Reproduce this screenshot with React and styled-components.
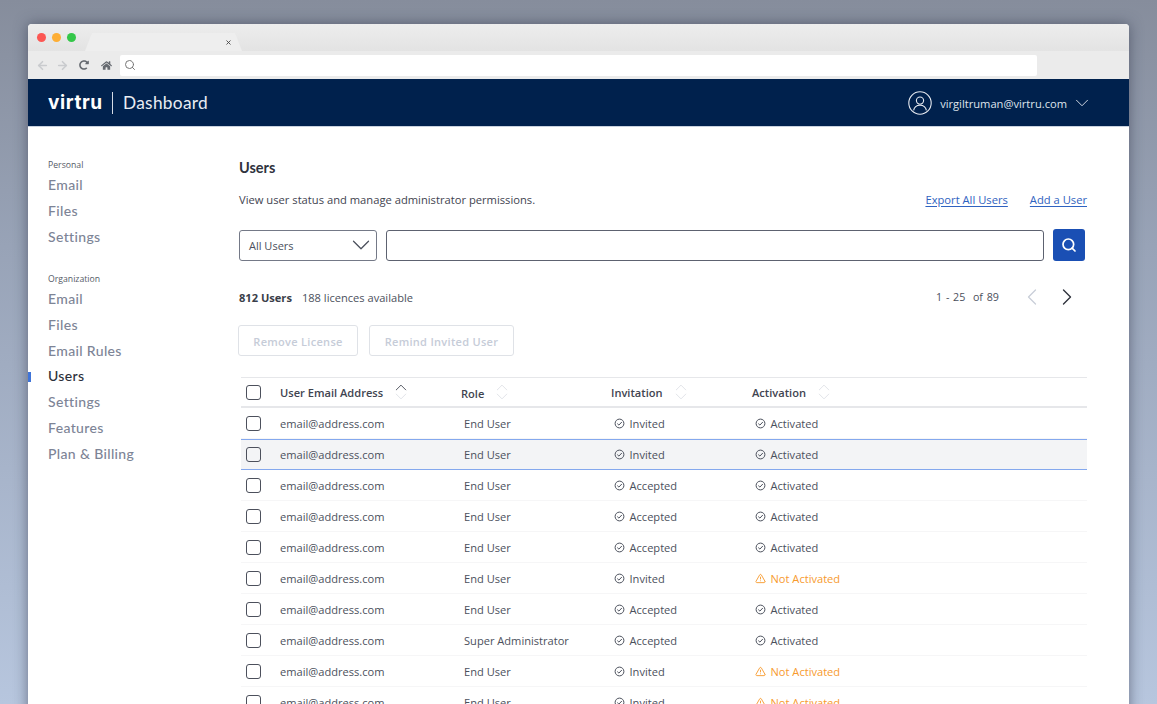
import styled, { createGlobalStyle } from 'styled-components';
import { ArrowLeft, ArrowRight, ChevronDown, ChevronLeft, ChevronRight, ChevronUp, Search, TriangleAlert, X } from 'lucide-react';
import { FaHome, FaRedoAlt } from 'react-icons/fa';

const GlobalStyle = createGlobalStyle`
  html, body {
    margin: 0;
    height: 704px;
    overflow: hidden;
  }
  body {
    font-family: "Open Sans", "Liberation Sans", sans-serif;
    color: #3f4450;
  }
`;

const Page = styled.div`
  height: 704px;
  box-sizing: border-box;
  padding: 24px 28px 0;
  overflow: hidden;
  background: linear-gradient(180deg, #868d9c 0%, #98a3b7 35%, #b7c6de 100%);
`;

const Window = styled.div`
  height: 720px;
  background: #fff;
  border-radius: 4px 4px 0 0;
  box-shadow: 0 0 14px rgba(55, 62, 80, 0.62);
  overflow: hidden;
`;

const TabStrip = styled.div`
  height: 27px;
  display: flex;
  align-items: flex-end;
  background: linear-gradient(180deg, #ededed, #e3e3e3);
`;

const Dots = styled.div`
  display: flex;
  gap: 6px;
  align-self: flex-start;
  padding: 9px 0 0 9px;
  width: 50px;
  margin-right: -2px;
`;

const Dot = styled.span`
  width: 9px;
  height: 9px;
  border-radius: 50%;
  background: ${({ $color }) => $color};
`;

const Tab = styled.div`
  width: 157px;
  height: 18px;
  box-sizing: border-box;
  display: flex;
  justify-content: flex-end;
  align-items: center;
  padding: 0 10px 0 0;
  background: #eeeeee;
  clip-path: polygon(7px 0, 150px 0, 157px 100%, 0 100%);
  color: #444;
`;

const Toolbar = styled.div`
  height: 28px;
  box-sizing: border-box;
  display: flex;
  align-items: center;
  padding: 0 92px 0 6px;
  background: #ebebeb;
`;

const NavGlyph = styled.span`
  display: flex;
  justify-content: center;
  width: ${({ $width }) => $width}px;
  color: ${({ $dim }) => ($dim ? '#c9cbce' : '#666a70')};
`;

const AddressBar = styled.div`
  flex: 1;
  height: 21px;
  margin-left: 2px;
  display: flex;
  align-items: center;
  padding-left: 4px;
  border-radius: 2px;
  background: #fff;
  color: #777;
`;

const Header = styled.header`
  height: 47px;
  display: flex;
  align-items: center;
  padding: 0 36px 0 20px;
  background: #00214d;
  border-bottom: 1px solid #c9d2df;
  color: #fff;
`;

const Logo = styled.span`
  font-family: Inter, sans-serif;
  font-size: 19px;
  font-weight: 700;
  letter-spacing: 0.6px;
  width: 54px;
`;

const Divider = styled.span`
  width: 1px;
  height: 22px;
  margin: 0 10px;
  background: #d5dbe5;
`;

const Product = styled.span`
  font-family: Lato, sans-serif;
  font-size: 17.3px;
  letter-spacing: 0.3px;
  color: #e8ecf2;
`;

const Account = styled.div`
  margin-left: auto;
  padding-top: 1px;
  display: flex;
  align-items: center;
  font-size: 11.15px;
  color: #dfe4ec;
`;

const Avatar = styled.svg`
  width: 24px;
  height: 24px;
  margin-right: 8px;
`;

const AccountCaret = styled(ChevronDown)`
  margin-left: 4px;
`;

const Body = styled.div`
  display: flex;
`;

const Sidebar = styled.nav`
  width: 211px;
  flex-shrink: 0;
  padding-top: 32px;
`;

const NavGroup = styled.div`
  margin-bottom: 23px;
`;

const GroupLabel = styled.div`
  margin-bottom: 1px;
  padding-left: 20px;
  font-size: 8.7px;
  line-height: 12px;
  color: #555a66;
`;

const NavItem = styled.a`
  display: block;
  height: 26px;
  padding-left: ${({ $active }) => ($active ? 17 : 20)}px;
  font-family: Lato, sans-serif;
  font-size: 14px;
  font-weight: 500;
  line-height: 26px;
  letter-spacing: 0.35px;
  color: ${({ $active }) => ($active ? '#2c303a' : '#7d8496')};
  border-left: ${({ $active }) => ($active ? '3px solid #3f74d8' : 'none')};
`;

const ActiveItem = styled(NavItem)`
  height: 25px;
  line-height: 24px;
  border-image: linear-gradient(transparent 8px, #3f74d8 8px, #3f74d8 18px, transparent 18px) 1;
`;

const Main = styled.main`
  width: 848px;
  padding-top: 31px;
`;

const Title = styled.h1`
  margin: 0;
  font-family: Lato, sans-serif;
  font-size: 14.5px;
  font-weight: 700;
  line-height: 20px;
  color: #2f333d;
`;

const IntroRow = styled.div`
  display: flex;
  justify-content: space-between;
  align-items: center;
  margin-top: 13px;
  font-size: 11.2px;
  line-height: 18px;
`;

const Links = styled.div`
  display: flex;
  gap: 22px;
`;

const TextLink = styled.a`
  color: #2f62c0;
  text-decoration: underline;
  text-underline-offset: 2px;
`;

const FilterRow = styled.div`
  display: flex;
  align-items: center;
  margin-top: 20px;
  padding-right: 2px;
`;

const Select = styled.div`
  width: 138px;
  height: 31px;
  box-sizing: border-box;
  display: flex;
  align-items: center;
  justify-content: space-between;
  padding: 0 0 0 9px;
  border: 1px solid #747987;
  border-radius: 3px;
  font-size: 11px;
  color: #4b505c;
`;

const SearchInput = styled.div`
  flex: 1;
  height: 31px;
  box-sizing: border-box;
  margin: 0 9px;
  border: 1px solid #5d6270;
  border-radius: 3px;
`;

const SearchButton = styled.button`
  width: 32px;
  height: 32px;
  display: flex;
  align-items: center;
  justify-content: center;
  padding: 0;
  border: none;
  border-radius: 3px;
  background: #1a4fb4;
  color: #fff;
`;

const StatsRow = styled.div`
  display: flex;
  align-items: center;
  height: 24px;
  margin-top: 24px;
  font-size: 11.1px;
  color: #4b505c;
`;

const Strong = styled.strong`
  font-weight: 700;
  margin-right: 10px;
  color: #3a3e49;
`;

const Pager = styled.div`
  margin-left: auto;
  display: flex;
  align-items: center;
  width: 151px;
  font-size: 10.7px;
  word-spacing: 1px;
`;

const PageArrow = styled.span`
  display: flex;
  margin-left: ${({ $gap }) => $gap}px;
  color: ${({ $dim }) => ($dim ? '#c9ced8' : '#2f333d')};
`;

const Actions = styled.div`
  display: flex;
  gap: 11px;
  margin: 16px 0 0 -1px;
`;

const GhostButton = styled.button`
  height: 31px;
  width: ${({ $width }) => $width}px;
  padding: 1px 0 0;
  border: 1px solid #dfe2e7;
  border-radius: 3px;
  background: #fff;
  font-family: inherit;
  font-size: 11px;
  font-weight: 600;
  letter-spacing: 0.3px;
  color: #c6ccd8;
`;

const Table = styled.div`
  margin: 21px 0 0 2px;
  width: 846px;
  border-top: 1px solid #e6e7ea;
`;

const Row = styled.div`
  display: grid;
  grid-template-columns: 39px 181px 150px 141px 1fr;
  align-items: center;
  height: ${({ $head }) => ($head ? 28 : 30)}px;
  font-size: 11.1px;
  color: #4b505c;
  background: ${({ $hover }) => ($hover ? '#f3f4f6' : '#fff')};
  border-bottom: ${({ $head, $hover }) =>
    $hover ? '1px solid #84a8ee' : $head ? '2px solid #e6e7ea' : '1px solid #f6f6f7'};
  ${({ $hover }) => $hover && 'box-shadow: inset 0 1px 0 #84a8ee;'}
`;

const Box = styled.span`
  width: 13px;
  height: 13px;
  margin-left: 5px;
  border: 1.5px solid #4c505c;
  border-radius: 3px;
`;

const HeadCell = styled.div`
  display: flex;
  align-items: center;
  font-weight: 600;
  color: #3f4450;
`;

const HeadLabel = styled.span`
  padding-top: ${({ $low }) => ($low ? 2 : 0)}px;
`;

const SortMark = styled.span`
  display: flex;
  flex-direction: column;
  height: 28px;
  justify-content: center;
  margin-left: 8px;
  color: #dde0e6;
`;

const SortUp = styled(ChevronUp)`
  margin-bottom: -10px;
  color: ${({ $on }) => ($on ? '#3f4450' : '#dde0e6')};
`;

const Cell = styled.div`
  padding-left: ${({ $plain }) => ($plain ? 0 : 3)}px;
`;

const Status = styled(Cell)`
  display: flex;
  align-items: center;
  gap: 4.5px;
  color: ${({ $warn }) => ($warn ? '#f79a2e' : '#4b505c')};
`;

const Columns = [
  { label: 'User Email Address', active: true },
  { label: 'Role', low: true },
  { label: 'Invitation' },
  { label: 'Activation' },
];

const Users = [
  ['End User', 'Invited', true],
  ['End User', 'Invited', true, true],
  ['End User', 'Accepted', true],
  ['End User', 'Accepted', true],
  ['End User', 'Accepted', true],
  ['End User', 'Invited', false],
  ['End User', 'Accepted', true],
  ['Super Administrator', 'Accepted', true],
  ['End User', 'Invited', false],
  ['End User', 'Invited', false],
];

function SortIcon({ active }) {
  return (
    <SortMark>
      <SortUp size={20} strokeWidth={1.1} $on={active} />
      <ChevronDown size={20} strokeWidth={1.1} />
    </SortMark>
  );
}

function StatusIcon({ warn }) {
  if (warn) return <TriangleAlert size={11} strokeWidth={2} />;
  return (
    <svg width="11" height="11" viewBox="0 0 11 11" fill="none" stroke="currentColor" strokeWidth="1">
      <circle cx="5.5" cy="5.5" r="4.4" />
      <path d="M3.3 5.6 4.9 7.1 7.8 4" />
    </svg>
  );
}

export default function App() {
  return (
    <Page>
      <GlobalStyle />
      <Window>
        <TabStrip>
          <Dots>
            <Dot $color="#fc5753" />
            <Dot $color="#fdae35" />
            <Dot $color="#34c749" />
          </Dots>
          <Tab>
            <X size={7} strokeWidth={3} />
          </Tab>
        </TabStrip>
        <Toolbar>
          <NavGlyph $width={16} $dim><ArrowLeft size={13} strokeWidth={3} /></NavGlyph>
          <NavGlyph $width={24} $dim><ArrowRight size={13} strokeWidth={3} /></NavGlyph>
          <NavGlyph $width={20}><FaRedoAlt size={10} /></NavGlyph>
          <NavGlyph $width={24}><FaHome size={11} /></NavGlyph>
          <AddressBar><Search size={12} strokeWidth={2} /></AddressBar>
        </Toolbar>
        <Header>
          <Logo>virtru</Logo>
          <Divider />
          <Product>Dashboard</Product>
          <Account>
            <Avatar viewBox="0 0 24 24" fill="none" stroke="#e6eaf0" strokeWidth="1.1">
              <circle cx="12" cy="12" r="11.2" />
              <circle cx="12" cy="9.6" r="3.6" />
              <path d="M5.6 19.4c.6-3.4 2.8-5.2 6.4-5.2s5.8 1.8 6.4 5.2" />
            </Avatar>
            virgiltruman@virtru.com
            <AccountCaret size={22} strokeWidth={1} />
          </Account>
        </Header>
        <Body>
          <Sidebar>
            <NavGroup>
              <GroupLabel>Personal</GroupLabel>
              <NavItem>Email</NavItem>
              <NavItem>Files</NavItem>
              <NavItem>Settings</NavItem>
            </NavGroup>
            <NavGroup>
              <GroupLabel>Organization</GroupLabel>
              <NavItem>Email</NavItem>
              <NavItem>Files</NavItem>
              <NavItem>Email Rules</NavItem>
              <ActiveItem $active>Users</ActiveItem>
              <NavItem>Settings</NavItem>
              <NavItem>Features</NavItem>
              <NavItem>Plan &amp; Billing</NavItem>
            </NavGroup>
          </Sidebar>
          <Main>
            <Title>Users</Title>
            <IntroRow>
              View user status and manage administrator permissions.
              <Links>
                <TextLink>Export All Users</TextLink>
                <TextLink>Add a User</TextLink>
              </Links>
            </IntroRow>
            <FilterRow>
              <Select>
                All Users
                <ChevronDown size={30} strokeWidth={1} />
              </Select>
              <SearchInput />
              <SearchButton><Search size={16} strokeWidth={2.6} /></SearchButton>
            </FilterRow>
            <StatsRow>
              <Strong>812 Users</Strong>
              188 licences available
              <Pager>
                1 - 25 &nbsp;of 89
                <PageArrow $gap={19} $dim><ChevronLeft size={28} strokeWidth={1.1} /></PageArrow>
                <PageArrow $gap={7}><ChevronRight size={28} strokeWidth={1.2} /></PageArrow>
              </Pager>
            </StatsRow>
            <Actions>
              <GhostButton $width={120}>Remove License</GhostButton>
              <GhostButton $width={145}>Remind Invited User</GhostButton>
            </Actions>
            <Table>
              <Row $head>
                <Box />
                {Columns.map((col) => (
                  <HeadCell key={col.label}>
                    <HeadLabel $low={col.low}>{col.label}</HeadLabel>
                    <SortIcon active={col.active} />
                  </HeadCell>
                ))}
              </Row>
              {Users.map(([role, invite, activated, hover], i) => (
                <Row key={i} $hover={hover}>
                  <Box />
                  <Cell $plain>email@address.com</Cell>
                  <Cell>{role}</Cell>
                  <Status><StatusIcon />{invite}</Status>
                  <Status $warn={!activated}>
                    <StatusIcon warn={!activated} />
                    {activated ? 'Activated' : 'Not Activated'}
                  </Status>
                </Row>
              ))}
            </Table>
          </Main>
        </Body>
      </Window>
    </Page>
  );
}
